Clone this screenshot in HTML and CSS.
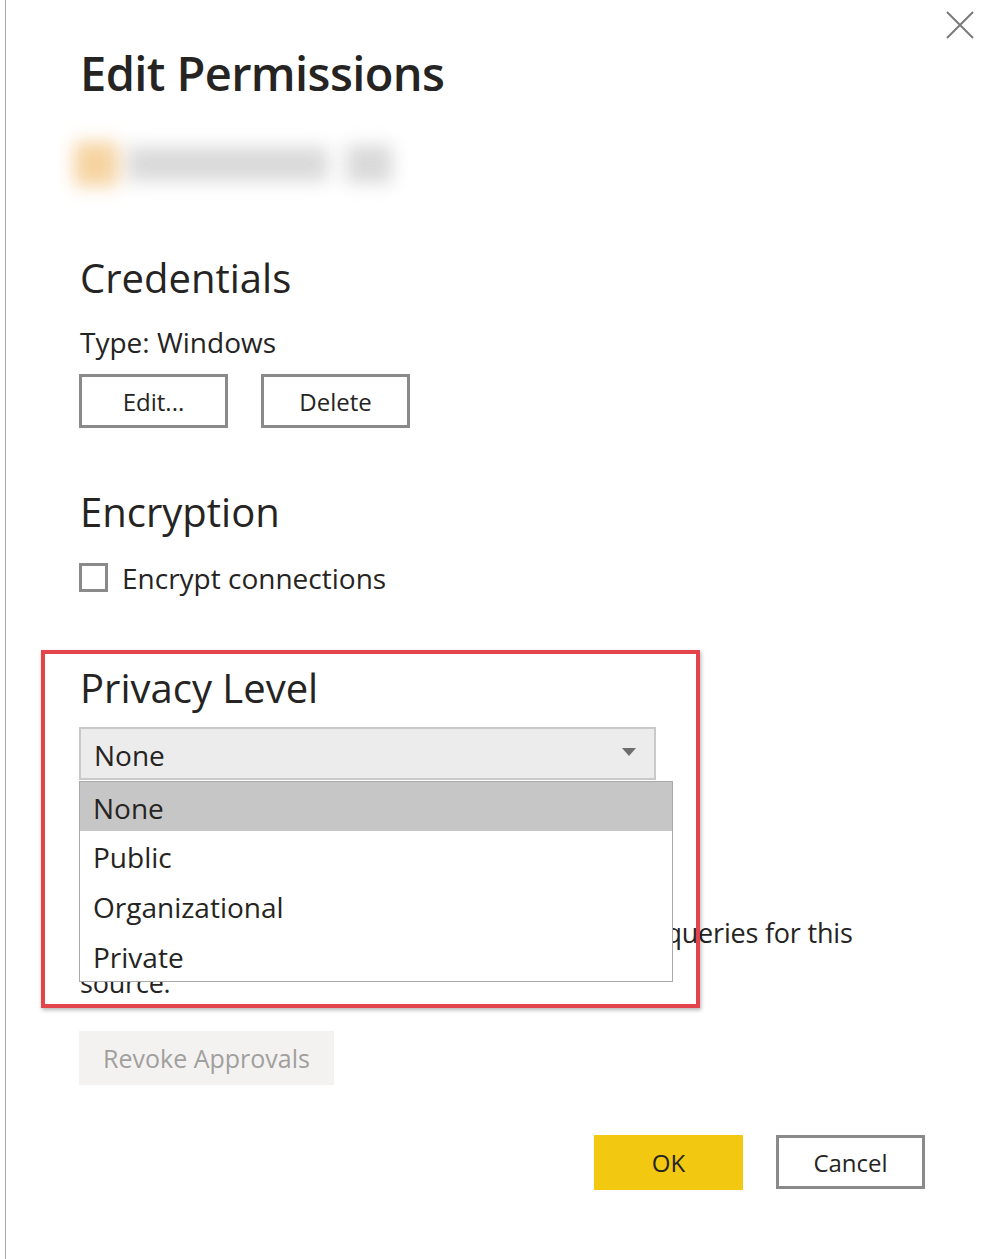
FILE: index.html
```html
<!DOCTYPE html>
<html lang="en">
<head>
<meta charset="utf-8">
<title>Edit Permissions</title>
<link rel="stylesheet" href="styles.css">
</head>
<body>
<div class="dialog">
  <button class="close" aria-label="Close">
    <svg width="28" height="28" viewBox="0 0 28 28"><path d="M1 1 L27 27 M27 1 L1 27" stroke="#7a7a7a" stroke-width="2" fill="none"/></svg>
  </button>

  <h1 class="title">Edit Permissions</h1>
  <div class="source-blur" aria-hidden="true">
    <span class="blob-orange"></span>
    <span class="blob-gray"></span>
    <span class="blob-gray small"></span>
  </div>

  <h2 class="section-title cred-title">Credentials</h2>
  <div class="type-line">Type: Windows</div>
  <div class="btn-row">
    <button class="btn outline">Edit...</button>
    <button class="btn outline">Delete</button>
  </div>

  <h2 class="section-title enc-title">Encryption</h2>
  <label class="check-row">
    <span class="checkbox"></span>
    <span class="check-label">Encrypt connections</span>
  </label>

  <section class="privacy">
    <div class="highlight-box" aria-hidden="true"></div>
    <h2 class="section-title privacy-title">Privacy Level</h2>
    <div class="select">
      <span class="select-value">None</span>
      <span class="select-arrow"></span>
    </div>
    <ul class="dropdown">
      <li class="opt selected">None</li>
      <li class="opt">Public</li>
      <li class="opt">Organizational</li>
      <li class="opt">Private</li>
    </ul>
    <h2 class="section-title native-title">Native Database Queries</h2>
    <p class="native-text">Require user approval for new native database queries for this<br>source.</p>
  </section>

  <button class="btn revoke">Revoke Approvals</button>

  <div class="footer">
    <button class="btn primary">OK</button>
    <button class="btn outline">Cancel</button>
  </div>
</div>
</body>
</html>
```

FILE: styles.css
```css
html, body {
  margin: 0;
  padding: 0;
  background: #ffffff;
}

body {
  font-family: "Open Sans", "Noto Sans", sans-serif;
  color: #252423;
}

.dialog {
  position: relative;
  margin-left: 5px;
  border-left: 1px solid #a8a8a8;
  height: 1259px;
  box-sizing: border-box;
  padding-left: 74px;
  overflow: hidden;
}

.close {
  position: absolute;
  top: 11px;
  left: 940px;
  width: 28px;
  height: 28px;
  padding: 0;
  border: 0;
  background: transparent;
}
.close svg { display: block; }

.title {
  margin: 45px 0 0;
  font-size: 47px;
  line-height: 56px;
  font-weight: 600;
  letter-spacing: -0.6px;
  color: #252423;
}

.source-blur {
  margin: 41px 0 0 -12px;
  width: 332px;
  height: 44px;
  display: flex;
  align-items: center;
  gap: 10px;
  filter: blur(9px);
}
.blob-orange {
  width: 44px;
  height: 44px;
  background: #f6d3a0;
  margin-left: 6px;
}
.blob-gray {
  width: 200px;
  height: 34px;
  background: #d9d9d9;
}
.blob-gray.small {
  width: 46px;
  height: 38px;
  margin-left: 8px;
}

.section-title {
  margin: 0;
  font-size: 40px;
  line-height: 48px;
  font-weight: 400;
  color: #252423;
}
.cred-title { margin-top: 68px; }

.type-line {
  margin-top: 22px;
  font-size: 28px;
  line-height: 36px;
}

.btn {
  font-family: "Open Sans", "Noto Sans", sans-serif;
  font-size: 24px;
  color: #252423;
  box-sizing: border-box;
  padding: 0;
  margin: 0;
  height: 54px;
  width: 149px;
  background: #ffffff;
  cursor: pointer;
}
.btn.outline {
  border: 3px solid #8a8a8a;
}
.btn-row {
  margin: 14px 0 0 -1px;
  display: flex;
  gap: 33px;
}

.enc-title { margin-top: 60px; }

.check-row {
  margin: 27px 0 0 -1px;
  display: flex;
  align-items: center;
  gap: 14px;
  height: 29px;
}
.checkbox {
  width: 29px;
  height: 29px;
  box-sizing: border-box;
  border: 3px solid #8a8a8a;
  background: #fff;
}
.check-label {
  font-size: 28px;
  line-height: 29px;
  padding-top: 2px;
}

.privacy {
  position: relative;
  margin-top: 72px;
}
.highlight-box {
  position: absolute;
  top: -14px;
  left: -39px;
  width: 659px;
  height: 358px;
  box-sizing: border-box;
  border: 4px solid #e3434b;
  box-shadow: 1px 2px 4px rgba(0, 0, 0, 0.3);
  z-index: 3;
  pointer-events: none;
}

.select {
  margin: 15px 0 0 -1px;
  width: 577px;
  height: 53px;
  box-sizing: border-box;
  border: 2px solid #c9c9c9;
  background: #ececec;
  display: flex;
  align-items: center;
  justify-content: space-between;
  padding: 0 18px 0 13px;
}
.select-value {
  font-size: 28px;
  line-height: 30px;
  padding-top: 2px;
}
.select-arrow {
  width: 0;
  height: 0;
  border-left: 7px solid transparent;
  border-right: 7px solid transparent;
  border-top: 8px solid #6e6e6e;
  margin-top: -4px;
}

.dropdown {
  position: absolute;
  top: 117px;
  left: -1px;
  width: 594px;
  margin: 0;
  padding: 0;
  list-style: none;
  box-sizing: border-box;
  border: 1px solid #a9a9a9;
  background: #fff;
  z-index: 2;
}
.opt {
  height: 50px;
  line-height: 52px;
  font-size: 28px;
  padding-left: 13px;
}
.opt.selected {
  background: #c6c6c6;
  height: 49px;
}

.native-title { margin-top: 60px; }
.native-text {
  margin: 20px 0 0;
  font-size: 27px;
  line-height: 50px;
  letter-spacing: -0.2px;
  white-space: nowrap;
}

.revoke {
  display: block;
  margin: 23px 0 0 -1px;
  width: 255px;
  border: 0;
  font-size: 25px;
  background: #f3f2f1;
  color: #a19f9d;
}

.footer {
  margin-top: 50px;
  display: flex;
  justify-content: flex-end;
  gap: 33px;
  padding-right: 79px;
}
.btn.primary {
  border: 0;
  background: #f2c811;
  height: 55px;
  color: #252423;
}
```
